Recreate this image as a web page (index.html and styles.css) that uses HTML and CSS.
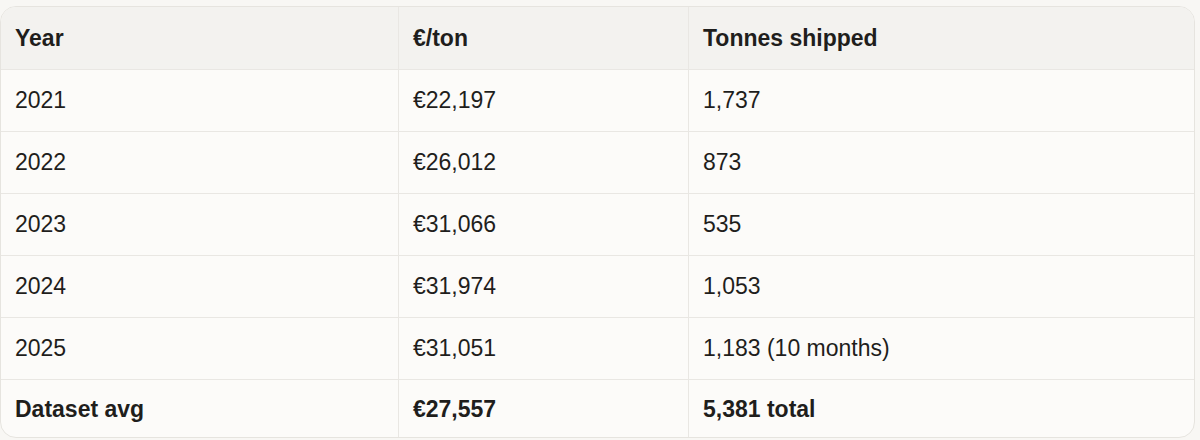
FILE: index.html
```html
<!DOCTYPE html>
<html lang="en">
<head>
<meta charset="utf-8">
<title>Dataset</title>
<link rel="stylesheet" href="styles.css">
</head>
<body>
<div class="wrap">
  <table class="data">
    <thead>
      <tr><th>Year</th><th>€/ton</th><th>Tonnes shipped</th></tr>
    </thead>
    <tbody>
      <tr><td>2021</td><td>€22,197</td><td>1,737</td></tr>
      <tr><td>2022</td><td>€26,012</td><td>873</td></tr>
      <tr><td>2023</td><td>€31,066</td><td>535</td></tr>
      <tr><td>2024</td><td>€31,974</td><td>1,053</td></tr>
      <tr><td>2025</td><td>€31,051</td><td>1,183 (10 months)</td></tr>
      <tr class="total"><td>Dataset avg</td><td>€27,557</td><td>5,381 total</td></tr>
    </tbody>
  </table>
</div>
</body>
</html>
```

FILE: styles.css
```css
html, body {
  margin: 0;
  padding: 0;
  background: #f8f7f4;
}
body {
  font-family: "Liberation Sans", Arial, sans-serif;
  color: #1f1e1c;
}
.wrap {
  margin: 6px 5px 0 0;
  width: 1195px;
  height: 432px;
  border: 1px solid #e6e4df;
  border-radius: 16px;
  overflow: hidden;
  box-sizing: border-box;
  background: #fcfbf9;
}
.data {
  width: 100%;
  border-collapse: collapse;
  table-layout: fixed;
  font-size: 23px;
}
.data th:nth-child(1), .data td:nth-child(1) { width: 369px; }
.data th:nth-child(2), .data td:nth-child(2) { width: 261px; }
.data th, .data td {
  text-align: left;
  padding: 0 14px;
  height: 61px;
  border-bottom: 1px solid #e9e7e3;
  border-right: 1px solid #e9e7e3;
  vertical-align: middle;
  white-space: nowrap;
}
.data th:last-child, .data td:last-child { border-right: none; }
.data thead th {
  background: #f3f2ef;
  font-weight: 700;
  height: 62px;
}
.data tr.total td {
  font-weight: 700;
  border-bottom: none;
  height: 58px;
}
```
